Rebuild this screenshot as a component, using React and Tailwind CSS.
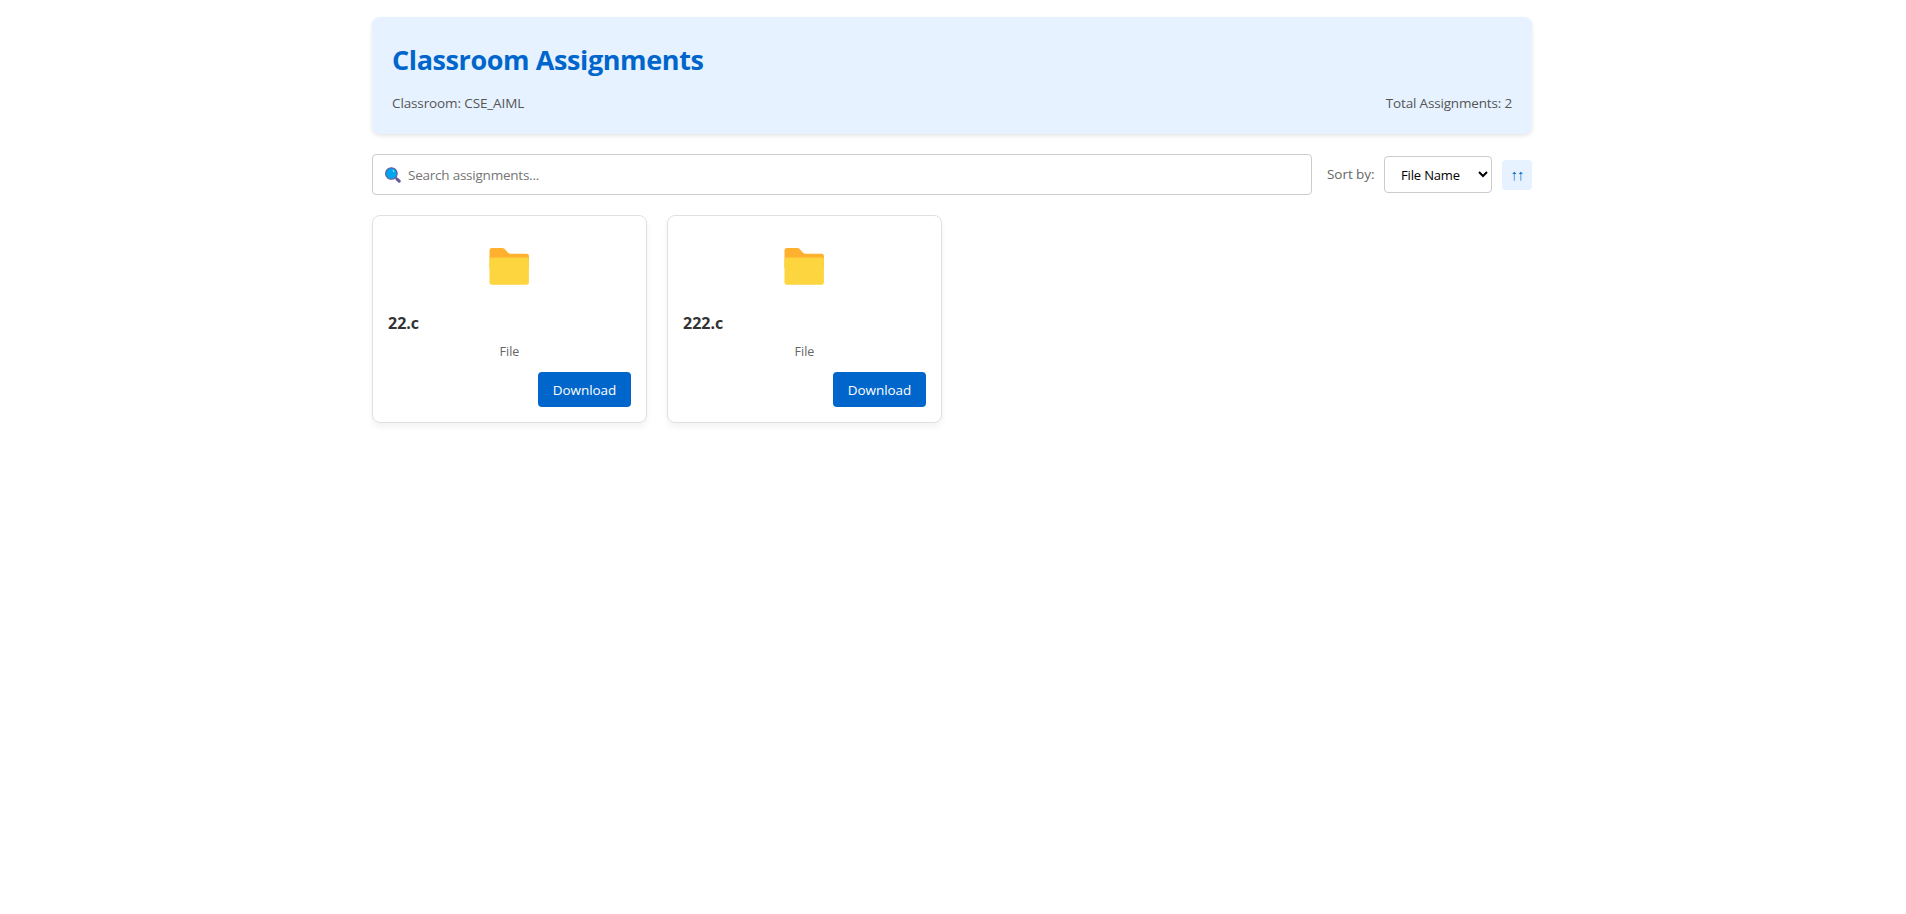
const files = [{ name: "22.c" }, { name: "222.c" }];

function SearchIcon() {
  return (
    <svg width="16" height="16" viewBox="0 0 16 16" className="pointer-events-none">
      <path d="M10.3 10.3 L12.2 12.2" stroke="#533566" strokeWidth="1.6" />
      <path d="M12 12.1 L14.2 14.2" stroke="#635994" strokeWidth="3" strokeLinecap="round" />
      <circle cx="6.4" cy="6.5" r="5.8" fill="#00A6ED" stroke="#635994" strokeWidth="1.1" />
      <ellipse cx="8.5" cy="4" rx="0.7" ry="1" transform="rotate(-35 8.5 4)" fill="#8FE0FF" />
    </svg>
  );
}

function FolderIcon() {
  return (
    <svg width="40" height="38" viewBox="0 0 40 38">
      <path d="M0.5 2.4 Q0.5 0 2.9 0 H13.2 Q14.6 0 15.6 1 L18.6 4.2 Q20 5.8 21.6 5.8 H37.8 Q39.9 5.8 39.9 7.9 V20 H0.5 Z" fill="#FFB02E" />
      <path d="M0.5 12 Q0.5 9.6 2.9 9.6 H37.5 Q39.9 9.6 39.9 12 V34.4 Q39.9 36.8 37.5 36.8 H2.9 Q0.5 36.8 0.5 34.4 Z" fill="#FCD53F" />
    </svg>
  );
}

function FileCard({ name }) {
  return (
    <article className="flex h-[208px] w-[275px] flex-col rounded-lg border border-[#e0e0e0] bg-white px-[15px] shadow-[0_4px_6px_rgba(0,0,0,0.05)]">
      <div className="mt-8 flex h-[38px] justify-center pr-px">
        <FolderIcon />
      </div>
      <h3 className="mt-[25px] text-base/6 font-bold text-[#333]">{name}</h3>
      <p className="mt-[7px] text-center text-[12.5px]/[20px] text-[#666]">File</p>
      <button className="mt-[10px] h-[35px] w-[93px] self-end rounded bg-[#0066cc] pt-px text-[13.5px] tracking-[-0.06px] text-white">
        Download
      </button>
    </article>
  );
}

export default function App() {
  return (
    <div className="min-h-screen bg-white pt-[17px] pl-[372px] font-['Open_Sans','Noto_Sans',sans-serif]">
      <main className="w-[1160px]">
        <header className="h-[117px] rounded-lg bg-[#e6f2ff] px-5 pt-6 shadow-[0_2px_4px_rgba(0,0,0,0.1)]">
          <h1 className="text-[27px]/[38px] font-bold tracking-[-0.4px] text-[#0066cc]">Classroom Assignments</h1>
          <div className="mt-[14px] flex justify-between text-[13.5px]/[20px] text-[#555]">
            <span className="tracking-[-0.12px]">Classroom: CSE_AIML</span>
            <span className="tracking-[-0.17px]">Total Assignments: 2</span>
          </div>
        </header>

        <div className="mt-5 flex h-[41px] items-center">
          <div className="relative h-[41px] w-[940px]">
            <input
              type="text"
              placeholder="Search assignments..."
              className="h-full w-full rounded border border-[#ccc] bg-white pl-[35px] text-[13.5px] tracking-[-0.23px] placeholder:text-[#757575]"
            />
            <span className="absolute top-[13px] left-[13px]">
              <SearchIcon />
            </span>
          </div>
          <span className="ml-[15px] w-[57px] pb-px text-[13.5px]/[20px] tracking-[-0.05px] text-[#666]">Sort by:</span>
          <select className="h-[37px] w-[108px] rounded border border-[#ccc] bg-white px-3 text-[13px] tracking-[-0.16px] text-black">
            <option>File Name</option>
          </select>
          <button className="ml-[10px] h-[30px] w-[30px] rounded bg-[#e6f2ff] pb-[2px] text-[15px]/[20px] tracking-[-1px] text-[#0066cc]">↑↑</button>
        </div>

        <section className="mt-5 flex gap-5">
          {files.map((file) => (
            <FileCard key={file.name} name={file.name} />
          ))}
        </section>
      </main>
    </div>
  );
}
